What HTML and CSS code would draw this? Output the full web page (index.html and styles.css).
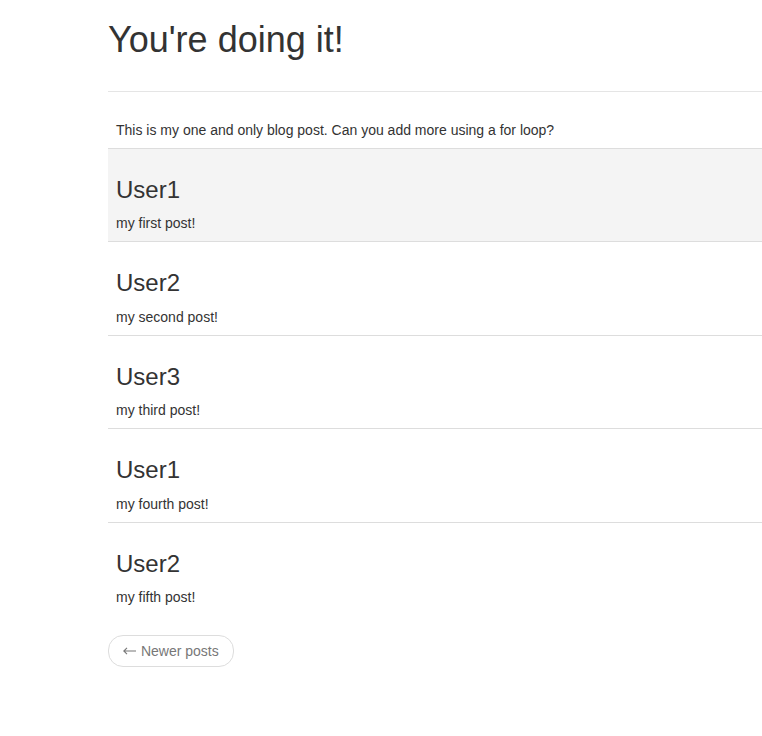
FILE: index.html
```html
<!DOCTYPE html>
<html>
<head>
<meta charset="utf-8">
<title>Blog</title>
<link rel="stylesheet" href="styles.css">
</head>
<body>
<div class="container">
  <div class="page-header">
    <h1>You're doing it!</h1>
  </div>
  <table class="table">
    <tbody>
      <tr class="intro"><td>This is my one and only blog post. Can you add more using a for loop?</td></tr>
      <tr class="hover"><td><h3>User1</h3><p>my first post!</p></td></tr>
      <tr><td><h3>User2</h3><p>my second post!</p></td></tr>
      <tr><td><h3>User3</h3><p>my third post!</p></td></tr>
      <tr><td><h3>User1</h3><p>my fourth post!</p></td></tr>
      <tr><td><h3>User2</h3><p>my fifth post!</p></td></tr>
    </tbody>
  </table>
  <ul class="pager">
    <li class="previous"><a href="#"><svg class="arrow" width="13" height="8" viewBox="0 0 13 8" aria-hidden="true"><path d="M0.5 4H13M4 0.8L0.8 4L4 7.2" fill="none" stroke="#777" stroke-width="1.1"/></svg> Newer posts</a></li>
  </ul>
</div>
</body>
</html>
```
FILE: styles.css
```css
* { box-sizing: border-box; }
html, body { margin: 0; padding: 0; }
body {
  font-family: "Liberation Sans", Arial, Helvetica, sans-serif;
  font-size: 14px;
  line-height: 20px;
  color: #333;
  background: #fff;
}
.container {
  margin-left: 108px;
}
.page-header {
  padding-bottom: 21px;
  border-bottom: 1px solid #e5e5e5;
  margin-bottom: 20px;
}
.page-header h1 {
  margin: 20px 0 10px;
  font-size: 36px;
  line-height: 40px;
  font-weight: 500;
}
.table {
  width: 100%;
  border-collapse: collapse;
  border-spacing: 0;
  margin-bottom: 20px;
}
.table td {
  padding: 8px;
  border-top: 1px solid #ddd;
  vertical-align: top;
}
.table tr.intro td {
  border-top: none;
}
.table tr.hover td {
  background: #f4f4f4;
}
.table h3 {
  margin: 20px 0 10px;
  font-size: 24px;
  line-height: 26.4px;
  font-weight: 500;
}
.table p {
  margin: 0;
}
.pager {
  list-style: none;
  margin: 20px 0;
  padding: 0;
}
.pager li {
  display: inline;
}
.pager a {
  display: inline-block;
  padding: 5px 14px;
  border: 1px solid #ddd;
  border-radius: 15px;
  background: #fff;
  color: #777;
  text-decoration: none;
}
.pager .arrow {
  display: inline-block;
  vertical-align: 1px;
  margin-right: 1px;
}
```
